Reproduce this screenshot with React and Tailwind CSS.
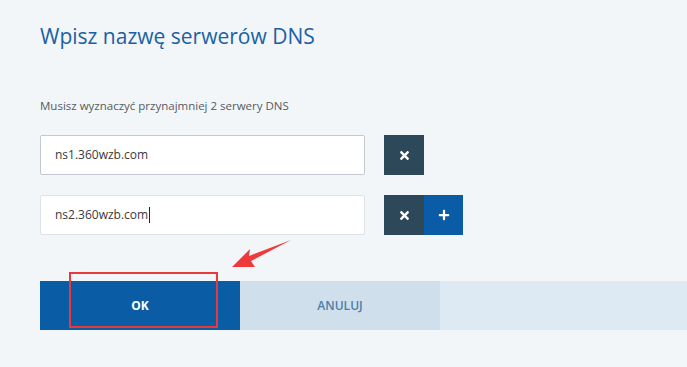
import { FaTimes, FaPlus } from "react-icons/fa";

const font = { fontFamily: '"Open Sans", "Noto Sans", sans-serif' };

const DnsRow = ({ value, caret, canAdd, light }) => (
  <div className="flex items-center">
    <div
      className={`flex h-10 w-[325px] items-center rounded-[2px] border bg-white px-[14px] text-[12px] text-[#3a3a3a] ${
        light ? "border-[#dde3e8]" : "border-[#c3c9cf]"
      }`}
    >
      <span>{value}</span>
      {caret && <span className="ml-px h-4 w-px bg-[#222]" />}
    </div>
    <div className="ml-[19px] flex">
      <button className="flex h-10 w-10 items-center justify-center bg-[#2d4858] text-white">
        <FaTimes className="text-[13px]" />
      </button>
      {canAdd && (
        <button className="flex h-10 w-[39px] items-center justify-center bg-[#0a5ca6] text-white">
          <FaPlus className="text-[12px]" />
        </button>
      )}
    </div>
  </div>
);

export default function App() {
  return (
    <div className="relative h-[367px] w-[687px] overflow-hidden bg-[#f2f6f9]" style={font}>
      <div className="pl-10 pt-[21px]">
        <h1 className="text-[21px] leading-[30px] text-[#1a61a3]">Wpisz nazwę serwerów DNS</h1>
        <p className="mt-[47px] text-[11.5px] leading-4 text-[#555b60]">
          Musisz wyznaczyć przynajmniej 2 serwery DNS
        </p>
        <div className="mt-[21px] flex flex-col gap-5">
          <DnsRow value="ns1.360wzb.com" />
          <DnsRow value="ns2.360wzb.com" caret canAdd light />
        </div>
      </div>

      <div className="mt-[46px] flex h-[49px] pl-10">
        <button className="flex w-[200px] items-center justify-center bg-[#0a5ca4] text-[12px] font-bold text-white">
          OK
        </button>
        <button className="flex w-[200px] items-center justify-center bg-[#cfdfeb] text-[12px] font-semibold text-[#4a7ea8]">
          ANULUJ
        </button>
        <div className="flex-1 bg-[#deeaf3]" />
      </div>

      {/* annotation overlay */}
      <div className="absolute left-[69px] top-[272px] h-[56px] w-[149px] border-2 border-[#e8393c]" />
      <svg className="absolute left-[225px] top-[236px]" width="70" height="36" viewBox="0 0 70 36">
        <path d="M66 4 L24 20 L25 13 L7 31 L30 31 L26 25 Z" fill="#ee3a3a" />
      </svg>
    </div>
  );
}
